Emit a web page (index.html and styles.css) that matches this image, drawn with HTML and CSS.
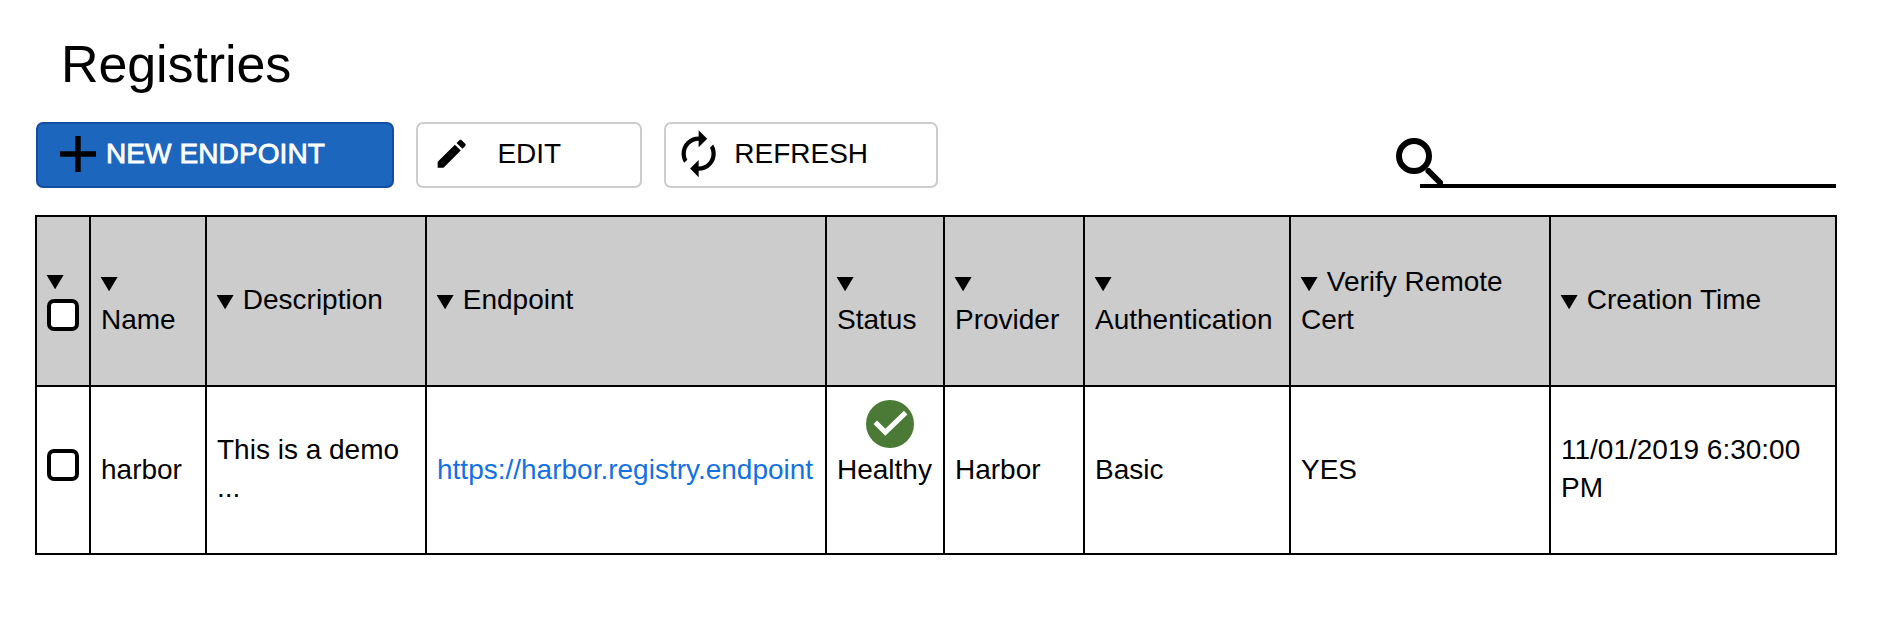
FILE: index.html
```html
<!DOCTYPE html>
<html lang="en">
<head>
<meta charset="utf-8">
<title>Registries</title>
<link rel="stylesheet" href="styles.css">
</head>
<body>
<svg class="defs" width="0" height="0"><symbol id="caret" viewBox="0 0 18 14"><path d="M.6 0h17L9.100 14.300z"/></symbol></svg>
<main class="page">
  <h1 class="title">Registries</h1>
  <div class="toolbar">
    <button class="btn btn-primary"><svg class="plus" viewBox="0 0 36 36"><path d="M15.300 0h5.400v15.300H36v5.400H20.700V36h-5.400V20.700H0v-5.400h15.300z"/></svg><span>NEW ENDPOINT</span></button>
    <button class="btn btn-edit"><svg class="pencil" viewBox="0 0 24 24"><path d="M3 17.250V21h3.750L17.810 9.940l-3.750-3.750L3 17.250zM20.710 7.040c.39-.39.39-1.020 0-1.410l-2.340-2.340c-.39-.39-1.020-.39-1.410 0l-1.830 1.830 3.750 3.750 1.830-1.830z"/></svg><span>EDIT</span></button>
    <button class="btn btn-refresh"><svg class="renew" viewBox="0 0 24 24"><path d="M12 6v3l4-4-4-4v3c-4.420 0-8 3.580-8 8 0 1.570.46 3.030 1.240 4.260L6.700 14.800c-.45-.83-.7-1.790-.7-2.800 0-3.310 2.690-6 6-6zm6.760 1.740L17.300 9.200c.44.84.7 1.790.7 2.800 0 3.310-2.690 6-6 6v-3l-4 4 4 4v-3c4.420 0 8-3.580 8-8 0-1.570-.46-3.030-1.240-4.260z"/></svg><span>REFRESH</span></button>
    <div class="search">
      <svg class="lens" viewBox="0 0 50 50"><circle cx="18" cy="18" r="15"/><path d="M32.500 33l11.500 11.500" stroke-linecap="round"/></svg>
      <input class="search-input" type="text" aria-label="Search">
    </div>
  </div>
  <table class="grid">
    <colgroup><col class="c1"><col class="c2"><col class="c3"><col class="c4"><col class="c5"><col class="c6"><col class="c7"><col class="c8"><col class="c9"></colgroup>
    <thead>
      <tr>
        <th><div class="pick"><svg class="caret"><use href="#caret"/></svg><input type="checkbox" class="box"></div></th>
        <th><svg class="caret"><use href="#caret"/></svg> Name</th>
        <th class="single"><svg class="caret"><use href="#caret"/></svg> Description</th>
        <th class="single"><svg class="caret"><use href="#caret"/></svg> Endpoint</th>
        <th><svg class="caret"><use href="#caret"/></svg> Status</th>
        <th><svg class="caret"><use href="#caret"/></svg> Provider</th>
        <th><svg class="caret"><use href="#caret"/></svg> Authentication</th>
        <th><svg class="caret"><use href="#caret"/></svg> Verify Remote Cert</th>
        <th class="single"><svg class="caret"><use href="#caret"/></svg> Creation Time</th>
      </tr>
    </thead>
    <tbody>
      <tr>
        <td><div class="pick pick-row"><input type="checkbox" class="box"></div></td>
        <td>harbor</td>
        <td class="double">This is a demo ...</td>
        <td><a class="link" href="#">https://harbor.registry.endpoint</a></td>
        <td><svg class="ok" viewBox="0 0 48 48"><circle cx="24" cy="24" r="24"/><path d="M9.300 22.300l10 10 20.400-19.700"/></svg>Healthy</td>
        <td>Harbor</td>
        <td>Basic</td>
        <td>YES</td>
        <td class="double">11/01/2019 6:30:00 PM</td>
      </tr>
    </tbody>
  </table>
</main>
</body>
</html>
```

FILE: styles.css
```css
body {
  margin: 0;
  background: #fff;
  color: #000;
  font: 28px/38px "Liberation Sans", Arial, sans-serif;
}
.defs { display: block; }
.page { padding: 34px 0 0 35px; width: 1802px; }
.title {
  margin: 0 0 28px 26px;
  font-size: 52px;
  line-height: 60px;
  font-weight: 400;
  letter-spacing: -.1px;
}
.toolbar { display: flex; height: 66px; margin: 0 0 27px 1px; }
.btn {
  display: flex;
  align-items: center;
  box-sizing: border-box;
  height: 66px;
  padding: 0;
  border: 2px solid #ccc;
  border-radius: 7px;
  background: #fff;
  color: #000;
  font: inherit;
  white-space: nowrap;
}
.btn svg { flex: none; }
.btn span { margin-top: -2px; }
.btn-primary {
  width: 358px;
  margin-right: 22px;
  padding-left: 22px;
  border-color: #134ca0;
  background: #1d66bd;
}
.btn-primary span { color: #fff; letter-spacing: .1px; -webkit-text-stroke: .8px #fff; }
.plus { width: 36px; height: 36px; margin: -2px 10px 0 0; }
.btn-edit { width: 226px; margin-right: 22px; padding-left: 15px; }
.pencil { width: 37.4px; height: 37.4px; margin: -2px 27px 0 0; }
.btn-refresh { width: 274px; padding-left: 7px; }
.renew { width: 51.3px; height: 51.3px; margin: -2px 10px 0 0; }
.search {
  position: relative;
  width: 416px;
  margin-left: auto;
  margin-right: 1px;
}
.search-input {
  display: block;
  box-sizing: border-box;
  width: 416px;
  height: 66px;
  padding: 0 0 0 30px;
  border: 0;
  border-bottom: 4px solid #000;
  background: transparent;
  font: inherit;
  outline: 0;
}
.lens {
  position: absolute;
  left: -24px;
  top: 16px;
  width: 50px;
  height: 50px;
  fill: none;
  stroke: #000;
  stroke-width: 6;
}
.grid {
  width: 1802px;
  box-sizing: border-box;
  table-layout: fixed;
  border-collapse: separate;
  border-spacing: 0;
  border: solid #000;
  border-width: 2px 0 0 2px;
}
.c1 { width: 54px; }
.c2 { width: 116px; }
.c3 { width: 220px; }
.c4 { width: 400px; }
.c5 { width: 118px; }
.c6 { width: 140px; }
.c7 { width: 206px; }
.c8 { width: 260px; }
.c9 { width: 286px; }
.grid th, .grid td {
  box-sizing: border-box;
  padding: 0 8px 0 10px;
  border: solid #000;
  border-width: 0 2px 2px 0;
  font-weight: 400;
  text-align: left;
  vertical-align: middle;
}
.grid td:nth-child(5) { padding-right: 0; }
.grid th { height: 170px; background: #ccc; }
.grid td { height: 168px; }
.grid th.single, .grid td.double { padding-bottom: 2px; }
.caret { width: 18px; height: 14px; margin: 0 1px 0 -1px; vertical-align: baseline; }
.pick { display: flex; flex-direction: column; gap: 10px; padding-top: 4px; }
.pick-row { padding: 0 0 10px; }
.box {
  appearance: none;
  box-sizing: border-box;
  width: 32px;
  height: 32px;
  margin: 0;
  border: 4px solid #000;
  border-radius: 7px;
  background: #fff;
}
.link { color: #1371e3; text-decoration: none; }
.ok {
  display: block;
  width: 48px;
  height: 48px;
  margin: -51px 0 3px 29px;
  fill: #4b7936;
}
.ok path { fill: none; stroke: #fff; stroke-width: 5; }
```
